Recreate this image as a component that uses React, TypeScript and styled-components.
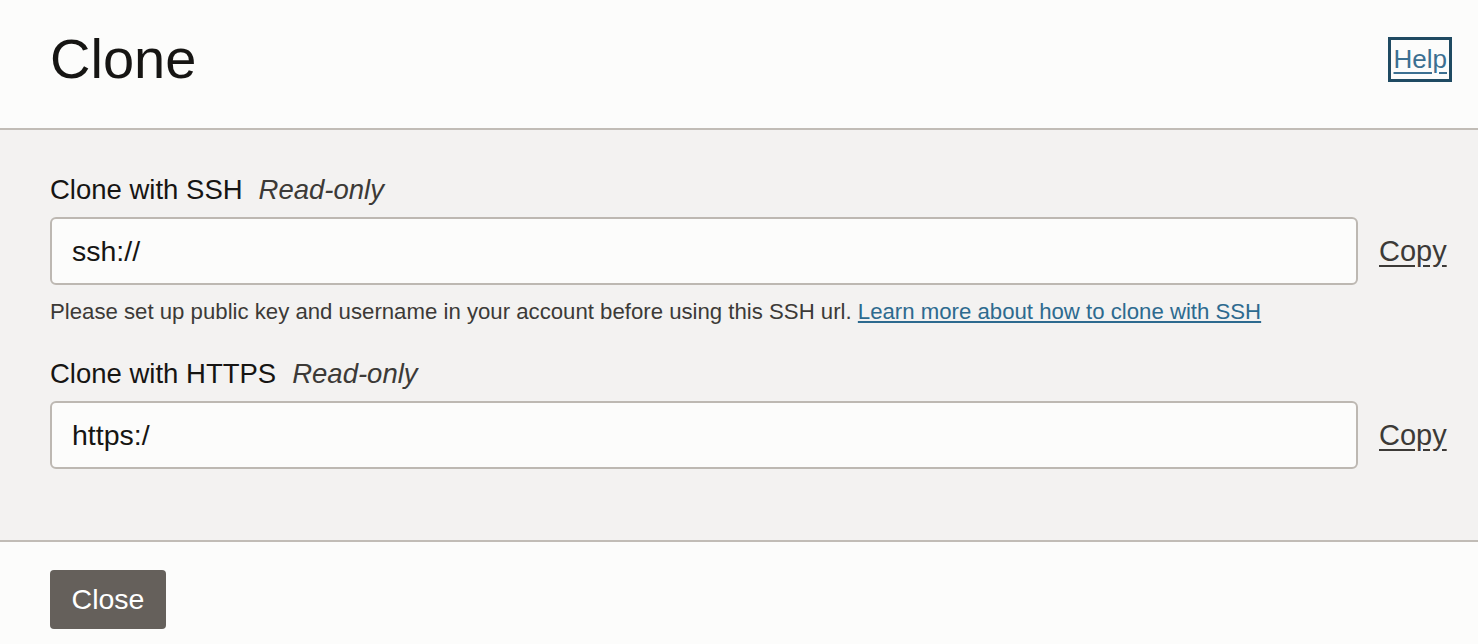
import React from "react";
import styled, { createGlobalStyle } from "styled-components";

const GlobalStyle = createGlobalStyle`
  html, body {
    margin: 0;
    padding: 0;
    background: #fcfcfb;
    font-family: "Liberation Sans", Arial, sans-serif;
    color: #161513;
  }
`;

const Page = styled.div`
  display: flex;
  flex-direction: column;
  width: 100%;
  min-height: 644px;
`;

const Header = styled.header`
  display: flex;
  align-items: center;
  justify-content: space-between;
  height: 130px;
  padding: 0 26px 10px 50px;
  box-sizing: border-box;
  border-bottom: 2px solid #c1bcb6;
  background: #fcfcfb;
`;

const Title = styled.h1`
  margin: 0;
  font-size: 56px;
  font-weight: 400;
  color: #161513;
  line-height: 1;
`;

const HelpLink = styled.a`
  display: flex;
  align-items: center;
  height: 45px;
  box-sizing: border-box;
  padding: 0 2px 0 3px;
  border: 3px solid #1f4a62;
  font-size: 26px;
  font-weight: 300;
  color: #3b6f91;
  text-decoration: underline;
  text-underline-offset: 4px;
  cursor: pointer;
`;

const Body = styled.main`
  display: flex;
  flex-direction: column;
  gap: 33px;
  padding: 44px 32px 71px 50px;
  background: #f3f2f1;
  border-bottom: 2px solid #c1bcb6;
`;

const Field = styled.section`
  display: flex;
  flex-direction: column;
`;

const Label = styled.label`
  display: flex;
  align-items: baseline;
  gap: 16px;
  font-size: 27.5px;
  color: #161513;
  line-height: 32px;
  margin-bottom: 11px;
`;

const Hint = styled.em`
  color: #3c3a37;
  font-style: italic;
`;

const Row = styled.div`
  display: flex;
  align-items: center;
  gap: 21px;
`;

const Input = styled.input`
  flex: 1;
  height: 68px;
  box-sizing: border-box;
  padding: 0 20px;
  border: 2px solid #bdb8b2;
  border-radius: 6px;
  background: #fcfcfb;
  font-family: "Liberation Sans", Arial, sans-serif;
  font-size: 28.5px;
  color: #161513;
  outline: none;
`;

const CopyLink = styled.a`
  width: 67px;
  font-size: 29px;
  color: #3c3a37;
  text-decoration: underline;
  text-underline-offset: 4px;
  cursor: pointer;
`;

const Note = styled.p`
  margin: 14px 0 0;
  font-size: 22.2px;
  line-height: 26px;
  color: #3c3a37;
`;

const NoteLink = styled.a`
  color: #2d6a8f;
  text-decoration: underline;
  cursor: pointer;
`;

const Footer = styled.footer`
  display: flex;
  align-items: center;
  padding: 28px 50px;
  background: #fcfcfb;
`;

const CloseButton = styled.button`
  height: 59px;
  width: 116px;
  padding: 0;
  border: none;
  border-radius: 4px;
  background: #65605b;
  color: #ffffff;
  font-family: "Liberation Sans", Arial, sans-serif;
  font-size: 28.5px;
  cursor: pointer;
`;

export default function App() {
  return (
    <Page>
      <GlobalStyle />
      <Header>
        <Title>Clone</Title>
        <HelpLink>Help</HelpLink>
      </Header>
      <Body>
        <Field>
          <Label>
            Clone with SSH <Hint>Read-only</Hint>
          </Label>
          <Row>
            <Input readOnly value="ssh://" />
            <CopyLink>Copy</CopyLink>
          </Row>
          <Note>
            Please set up public key and username in your account before using
            this SSH url.{" "}
            <NoteLink>Learn more about how to clone with SSH</NoteLink>
          </Note>
        </Field>
        <Field>
          <Label>
            Clone with HTTPS <Hint>Read-only</Hint>
          </Label>
          <Row>
            <Input readOnly value="https:/" />
            <CopyLink>Copy</CopyLink>
          </Row>
        </Field>
      </Body>
      <Footer>
        <CloseButton>Close</CloseButton>
      </Footer>
    </Page>
  );
}
